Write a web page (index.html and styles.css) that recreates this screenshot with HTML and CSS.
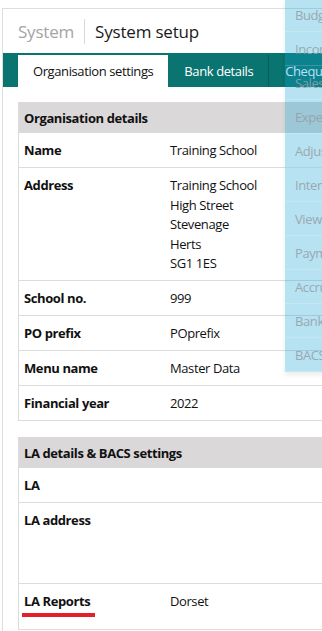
FILE: index.html
```html
<!DOCTYPE html>
<html>
   <head>
      <meta charset="utf-8">
      <title>System setup</title>
      <link rel="stylesheet" href="styles.css">
   </head>
   <body>
      <div class="frame">
         <div class="page-head">
            <span class="crumb">System</span>
            <span class="title">System setup</span>
         </div>

         <div class="tabs">
            <div class="tab active">Organisation settings</div>
            <div class="tab">Bank details</div>
            <div class="tab">Cheque settings</div>
         </div>

         <div class="panel">
            <table class="details">
               <tr class="head"><th colspan="2">Organisation details</th></tr>
               <tr><td class="label">Name</td><td>Training School</td></tr>
               <tr class="address"><td class="label">Address</td><td>Training School<br>High Street<br>Stevenage<br>Herts<br>SG1 1ES</td></tr>
               <tr><td class="label">School no.</td><td>999</td></tr>
               <tr><td class="label">PO prefix</td><td>POprefix</td></tr>
               <tr><td class="label">Menu name</td><td>Master Data</td></tr>
               <tr><td class="label">Financial year</td><td>2022</td></tr>
            </table>

            <table class="details">
               <tr class="head"><th colspan="2">LA details &amp; BACS settings</th></tr>
               <tr><td class="label">LA</td><td></td></tr>
               <tr class="tall"><td class="label">LA address</td><td></td></tr>
               <tr class="reports"><td class="label"><span class="marked">LA Reports</span></td><td>Dorset</td></tr>
            </table>
         </div>
      </div>

      <ul class="menu">
         <li>Budget</li>
         <li>Income</li>
         <li>Sales</li>
         <li>Expenditure</li>
         <li>Adjustments</li>
         <li>Interest</li>
         <li>View</li>
         <li>Payments</li>
         <li>Accruals</li>
         <li>Bank</li>
         <li>BACS</li>
      </ul>
   </body>
</html>
```

FILE: styles.css
```css
body {
    margin: 0;
    padding: 0;
    background: #fff;
    font-family: "Open Sans", "Noto Sans", sans-serif;
    font-size: 13px;
    letter-spacing: -0.4px;
    color: #111;
    overflow: hidden;
}
.frame {
    margin: 8px 0 0 2px;
    border-top: 1px solid #dedede;
    border-left: 1px solid #dedede;
    height: 640px;
    overflow: hidden;
}
.page-head {
    display: flex;
    align-items: center;
    height: 44px;
    padding-left: 15px;
    letter-spacing: -0.2px;
}
.crumb {
    color: #a4a4a4;
    font-size: 17px;
    padding-right: 10px;
    border-right: 1px solid #d8d8d8;
    line-height: 25px;
}
.title {
    color: #1a1a1a;
    font-size: 17px;
    padding-left: 10px;
}
.tabs {
    display: flex;
    background: #0a7470;
    height: 34px;
    padding-left: 15px;
    box-sizing: border-box;
    padding-top: 2px;
    white-space: nowrap;
}
.tab {
    color: #fff;
    padding: 0 15px 0 16px;
    line-height: 32px;
    border-right: 1px solid #065e5a;
}
.tab.active {
    background: #fff;
    color: #111;
    padding: 0 15px;
    border-right: none;
}
.panel {
    padding: 15px 0 0 15px;
}
.details {
    width: 420px;
    border-collapse: separate;
    border-spacing: 0;
    border-left: 1px solid #dcdcdc;
    margin-bottom: 16px;
}
.details th {
    background: #dad8d9;
    text-align: left;
    font-weight: bold;
    height: 31px;
    padding: 0 5px;
    box-sizing: border-box;
}
.details td {
    border-bottom: 1px solid #dcdcdc;
    padding: 8px 5px 7px 5px;
    line-height: 19px;
    vertical-align: top;
}
.details td.label {
    width: 136px;
    font-weight: bold;
}
.address td {
    line-height: 19.5px;
    padding-bottom: 6.5px;
}
.tall td {
    padding-bottom: 53px;
}
.reports td {
    padding-bottom: 18px;
}
.marked {
    display: inline-block;
    position: relative;
}
.marked::after {
    content: "";
    position: absolute;
    left: -2px;
    right: -5px;
    bottom: -6px;
    height: 4px;
    background: #e3202a;
}
.menu {
    position: absolute;
    top: -2px;
    left: 285px;
    width: 80px;
    margin: 0;
    padding: 0;
    list-style: none;
    background: rgba(20, 160, 210, 0.31);
    box-shadow: 0 3px 5px rgba(0, 0, 0, 0.08);
}
.menu li {
    height: 34px;
    line-height: 34px;
    padding-left: 10px;
    font-size: 13px;
    color: rgba(150, 160, 168, 0.9);
    border-bottom: 1px solid rgba(255, 255, 255, 0.18);
    box-sizing: border-box;
    white-space: nowrap;
}
```
